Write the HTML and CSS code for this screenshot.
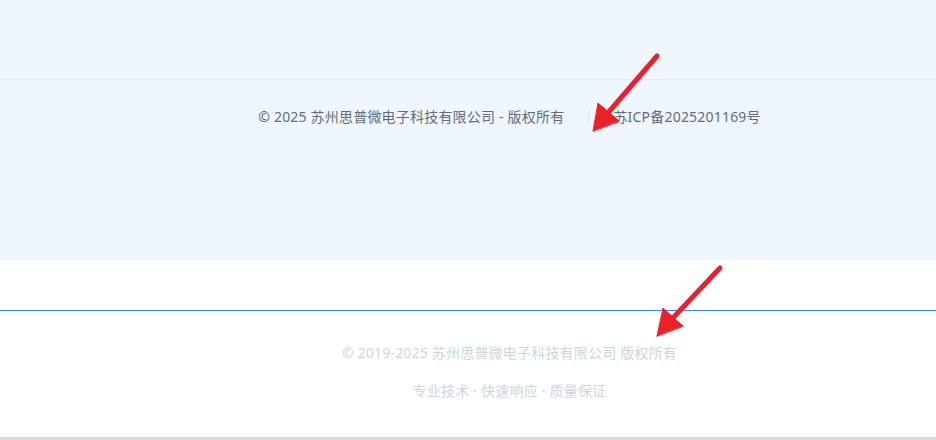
FILE: index.html
```html
<!DOCTYPE html>
<html lang="zh-CN">
<head>
<meta charset="utf-8">
<title>Footer</title>
<link rel="stylesheet" href="styles.css">
</head>
<body>
<div class="page">
  <section class="panel">
    <div class="panel-top"></div>
    <div class="copy-row">
      <span class="copy-text">© 2025 苏州思普微电子科技有限公司 - 版权所有</span>
      <span class="divider"></span>
      <span class="copy-text">苏ICP备2025201169号</span>
    </div>
  </section>
  <div class="gap-area"></div>
  <footer class="site-footer">
    <p class="foot-line">© 2019-2025 苏州思普微电子科技有限公司 版权所有</p>
    <p class="foot-line">专业技术 · 快速响应 · 质量保证</p>
  </footer>
  <div class="bottom-rule"></div>
  <svg class="annot" width="936" height="440" viewBox="0 0 936 440" aria-hidden="true">
    <g fill="#e8212b" stroke="#e8212b" stroke-linecap="round" stroke-linejoin="round">
      <line x1="657" y1="56" x2="607" y2="114" stroke-width="5"/>
      <polygon points="593,131 598,103 619,121" stroke-width="1"/>
      <line x1="720" y1="268" x2="671" y2="320" stroke-width="5"/>
      <polygon points="657,336 663,308 683,326" stroke-width="1"/>
    </g>
  </svg>
</div>
</body>
</html>
```
FILE: styles.css
```css
html, body {
  margin: 0;
  padding: 0;
  background: #ffffff;
}
body {
  font-family: "Noto Sans", "Noto Sans CJK SC", sans-serif;
  font-size: 14px;
  line-height: 20px;
  letter-spacing: 0.2px;
}
.page {
  position: relative;
  width: 936px;
  height: 440px;
  overflow: hidden;
}
.panel {
  height: 260px;
  background: #eff6ff;
}
.panel-top {
  height: 79px;
  border-bottom: 1px solid #e3ebf5;
}
.copy-row {
  display: flex;
  justify-content: center;
  align-items: center;
  gap: 24px;
  padding-top: 27px;
  padding-left: 83px;
  color: #5f6b7a;
}
.divider {
  width: 1px;
  height: 16px;
  background: #dde5ee;
}
.gap-area {
  height: 50px;
}
.site-footer {
  box-sizing: border-box;
  height: 127px;
  border-top: 1px solid #3b82f6;
  padding: 32px 0 0 83px;
  text-align: center;
  color: #cbd5e1;
}
.foot-line {
  margin: 0 0 18px;
  white-space: nowrap;
}
.bottom-rule {
  height: 3px;
  background: #dcdcdc;
}
.annot {
  position: absolute;
  left: 0;
  top: 0;
  pointer-events: none;
}
```
